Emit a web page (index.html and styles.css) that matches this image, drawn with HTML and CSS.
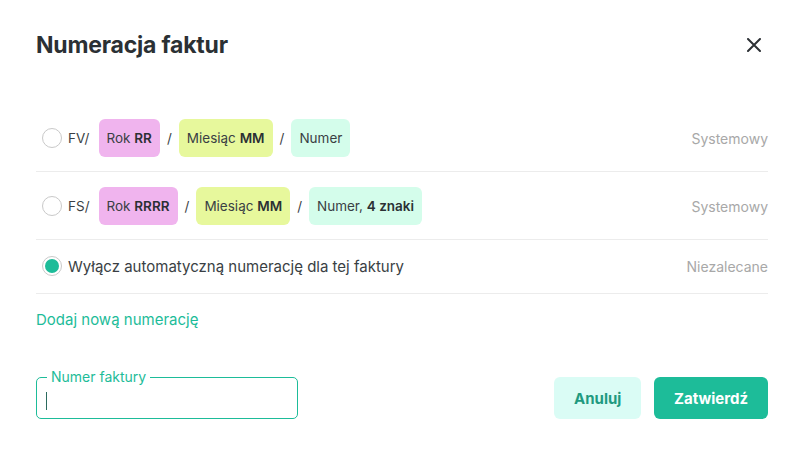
FILE: index.html
```html
<!DOCTYPE html>
<html lang="pl">

<head>
    <meta charset="utf-8">
    <title>Numeracja faktur</title>
    <link rel="stylesheet" href="styles.css">
</head>

<body>
    <div class="dialog">
        <div class="dialog-header">
            <h1>Numeracja faktur</h1>
            <button class="close" aria-label="Zamknij">
                <svg width="14" height="14" viewBox="0 0 14 14">
                    <path d="M1 1L13 13M13 1L1 13" stroke="#2d3135" stroke-width="2" stroke-linecap="round" />
                </svg>
            </button>
        </div>

        <ul class="options">
            <li class="option">
                <span class="radio"></span>
                <div class="pattern">
                    <span class="prefix">FV/</span>
                    <span class="pill pill-year">Rok <b>RR</b></span>
                    <span class="slash">/</span>
                    <span class="pill pill-month">Miesiąc <b>MM</b></span>
                    <span class="slash">/</span>
                    <span class="pill pill-number">Numer</span>
                </div>
                <span class="tag">Systemowy</span>
            </li>
            <li class="option">
                <span class="radio"></span>
                <div class="pattern">
                    <span class="prefix">FS/</span>
                    <span class="pill pill-year">Rok <b>RRRR</b></span>
                    <span class="slash">/</span>
                    <span class="pill pill-month">Miesiąc <b>MM</b></span>
                    <span class="slash">/</span>
                    <span class="pill pill-number">Numer, <b>4 znaki</b></span>
                </div>
                <span class="tag">Systemowy</span>
            </li>
            <li class="option option-plain">
                <span class="radio checked"></span>
                <div class="pattern">Wyłącz automatyczną numerację dla tej faktury</div>
                <span class="tag">Niezalecane</span>
            </li>
        </ul>

        <a class="add-link" href="#">Dodaj nową numerację</a>

        <div class="dialog-footer">
            <div class="field">
                <span class="field-label">Numer faktury</span>
                <span class="caret"></span>
            </div>
            <div class="actions">
                <button class="btn btn-cancel">Anuluj</button>
                <button class="btn btn-confirm">Zatwierdź</button>
            </div>
        </div>
    </div>
</body>

</html>
```

FILE: styles.css
```css
body {
    margin: 0;
    background: #ffffff;
    font-family: 'Inter', 'Noto Sans', sans-serif;
    color: #3a3f44;
}

.dialog {
    padding: 31px 35px 0 36px;
}

.dialog-header {
    display: flex;
    justify-content: space-between;
    align-items: center;
}

.dialog-header h1 {
    margin: 0;
    font-size: 23px;
    font-weight: 700;
    color: #2b3034;
    letter-spacing: -0.2px;
}

.close {
    border: 0;
    background: none;
    padding: 0;
    margin-right: 7px;
    display: flex;
}

/* lista numeracji */
.options {
    list-style: none;
    margin: 45px 0 0;
    padding: 0;
}

.option {
    display: flex;
    align-items: center;
    padding: 15px 0 14px;
    border-bottom: 1px solid #ececec;
    font-size: 13.5px;
}

.option-plain {
    padding: 16px 0 17px;
    font-size: 15px;
}

.radio {
    width: 18px;
    height: 18px;
    border: 1px solid #c9c9c9;
    border-radius: 50%;
    margin-left: 6px;
    margin-right: 6px;
    flex-shrink: 0;
    position: relative;
}

.radio.checked::after {
    content: "";
    position: absolute;
    left: 2px;
    top: 2px;
    width: 14px;
    height: 14px;
    border-radius: 50%;
    background: #1dbc99;
}

.pattern {
    flex: 1;
    display: flex;
    align-items: center;
    gap: 7px;
    color: #3a3f44;
}

.prefix {
    margin-right: 2px;
}

.pill {
    height: 38px;
    line-height: 38px;
    padding: 0 8px;
    border-radius: 6px;
}

.pill b {
    font-weight: 600;
    color: #2b3034;
}

.pill-year {
    background: #f0b4ee;
}

.pill-month {
    background: #e7f89c;
}

.pill-number {
    background: #d4fdeb;
}

.tag {
    color: #a8a8a8;
    font-size: 14px;
}

.add-link {
    display: inline-block;
    margin-top: 16px;
    font-size: 15px;
    color: #1dbc99;
    text-decoration: none;
}

/* stopka */
.dialog-footer {
    display: flex;
    justify-content: space-between;
    align-items: center;
    margin-top: 48px;
}

.field {
    position: relative;
    width: 260px;
    height: 40px;
    border: 1px solid #1dbc99;
    border-radius: 5px;
    display: flex;
    align-items: center;
}

.field-label {
    position: absolute;
    left: 10px;
    top: -9px;
    padding: 0 4px;
    background: #ffffff;
    font-size: 14px;
    line-height: 16px;
    color: #1dbc99;
}

.caret {
    width: 1px;
    height: 18px;
    margin-left: 9px;
    margin-top: 6px;
    background: #2b6b5e;
}

.actions {
    display: flex;
    gap: 13px;
}

.btn {
    height: 42px;
    border: 0;
    border-radius: 6px;
    font-family: inherit;
    font-size: 15px;
    font-weight: 700;
    padding: 0 20px;
}

.btn-cancel {
    width: 87px;
    background: #dafcf5;
    color: #1f9a80;
}

.btn-confirm {
    width: 114px;
    background: #1dbc99;
    color: #ffffff;
}
```
